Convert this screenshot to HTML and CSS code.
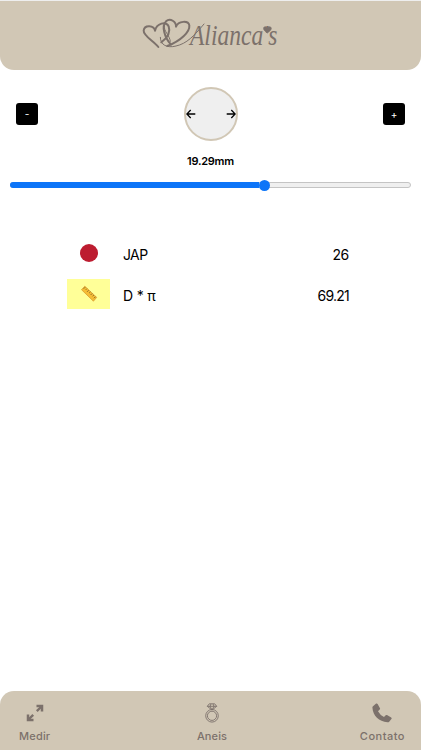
FILE: index.html
```html
<!DOCTYPE html>
<html lang="pt">
<head>
<meta charset="utf-8">
<meta name="viewport" content="width=device-width">
<title>Alianca's</title>
<link rel="stylesheet" href="styles.css">
</head>
<body>
<header class="header">
  <svg class="logo" viewBox="0 0 480 150">
    <g fill="none" stroke="#7c716b" stroke-linecap="round" stroke-linejoin="round">
      <path stroke-width="6" d="M85 111C70 92 40 78 41 62C43 43 72 45 75 62C80 40 108 32 116 49C122 65 112 83 94 97"/>
      <path stroke-width="6" d="M123 104C103 82 94 48 108 34C121 22 139 36 138 50C145 32 175 31 178 46C180 65 154 91 112 108"/>
      <path stroke-width="3" d="M91 82C91 105 111 115 138 108C170 101 192 78 222 42"/>
      <path stroke-width="3" d="M103 47C100 64 119 75 121 94"/>
    </g>
    <text class="brand" x="180" y="106" textLength="262" lengthAdjust="spacingAndGlyphs">Alianca's</text>
    <path fill="#7c716b" d="M412 69C405 63 399 59 401 53C403 48 410 50 412 55C415 49 423 49 424 55C424 61 417 65 412 69Z" stroke="#7c716b" stroke-width="2"/>
  </svg>
</header>
<main class="main">
  <section class="measure">
    <button class="step">-</button>
    <div class="ring">
      <svg viewBox="0 0 10 10"><path d="M9.3 5H.8M4.7 1 .8 5l3.9 4"/></svg>
      <svg viewBox="0 0 10 10"><path d="M.7 5h8.5M5.3 1l3.9 4-3.9 4"/></svg>
    </div>
    <button class="step">+</button>
  </section>
  <div class="size">19.29mm</div>
  <div class="slider"><div class="fill"></div><div class="thumb"></div></div>
  <section class="results">
    <div class="row">
      <div class="flag"><span class="sun"></span></div>
      <span class="name">JAP</span><span class="value jap">26</span>
    </div>
    <div class="row">
      <div class="flag yellow">
        <svg class="ruler" viewBox="0 0 18 18">
          <path fill="#f6bd35" stroke="#d4972c" stroke-width=".7" d="M1.5 4.7 4.8 1.2 16.7 12.4 13.4 16.2Z"/>
          <path stroke="#705628" stroke-width=".8" d="m5.2 2.2-1.5 1.5m3.2 0L5.8 4.8m2.8.5L7.1 6.8m3.3.1L9.2 8m2.9.5-1.5 1.5m3.2.1-1.2 1.2m2.9.4L14 13.2"/>
        </svg>
      </div>
      <span class="name pi">D * π</span><span class="value">69.21</span>
    </div>
  </section>
</main>
<nav class="nav">
  <a class="item">
    <svg viewBox="0 0 20 20"><g fill="none" stroke="#7c716b" stroke-width="2.4"><path d="M11.8 8.2 16.5 3.5M8.2 11.8l-4.7 4.7"/><path stroke-width="2.5" d="M11.5 3H17v5.5M3 11.5V17h5.5"/></g></svg>
    <span class="medir">Medir</span>
  </a>
  <a class="item">
    <svg viewBox="0 0 20 20"><g fill="none" stroke="#7c716b" stroke-width=".9"><circle cx="10" cy="12.8" r="6.3"/><circle cx="10" cy="12.8" r="4.6"/><path d="M7.3.8h5.4l2 2.5L10 7 5.3 3.3ZM5.3 3.3h9.4M8 3.3l2 3.6 2-3.6M8 3.3 9 1m3 2.3L11 1"/></g></svg>
    <span class="aneis">Aneis</span>
  </a>
  <a class="item">
    <svg viewBox="0 0 20 20"><path fill="#7c716b" d="M1 3.2 4.1.6Q5 .1 5.6 1L8 5.3Q8.3 6 7.7 6.6L6 8.2Q8 12 12 14L13.7 12.3Q14.3 11.8 15 12.1L19.2 14.4Q20 15 19.6 15.7L17.2 18.8Q16.6 19.4 15.5 19.3C7 18.8.9 13 .4 4.6Q.4 3.7 1 3.2Z"/></svg>
    <span class="contato">Contato</span>
  </a>
</nav>
</body>
</html>
```
FILE: styles.css
```css
* { box-sizing: border-box; }
body {
  margin: 0;
  height: 750px;
  display: flex;
  flex-direction: column;
  overflow: hidden;
  background: #fff;
  color: #000;
  font-family: Inter, "Open Sans", sans-serif;
}
.header {
  width: 421px;
  height: 69.5px;
  border-top: 1px solid #eee;
  border-radius: 0 0 14px 14px;
  background: #d1c7b5;
  padding: 9px 0 0 130px;
}
.logo { display: block; width: 160px; height: 50px; overflow: visible; }
.brand { font: italic 90px "Liberation Serif", serif; fill: #7c716b; }
.main { flex: 1; }
.measure {
  display: flex;
  align-items: center;
  justify-content: space-between;
  width: 421px;
  height: 54px;
  margin-top: 17px;
  padding: 0 16px;
}
.step {
  width: 22px;
  height: 22px;
  padding: 0;
  border: 0;
  border-radius: 3px;
  background: #000;
  color: #fff;
  font: 10px Inter, sans-serif;
}
.ring {
  display: flex;
  align-items: center;
  justify-content: space-between;
  width: 54px;
  height: 54px;
  border: 2px solid #d1c7b5;
  border-radius: 50%;
  background: #efefef;
}
.ring svg { width: 10px; height: 10px; fill: none; stroke: #000; stroke-width: 1.3; }
.size {
  width: 421px;
  margin-top: 12.5px;
  height: 16px;
  line-height: 16px;
  text-align: center;
  font-size: 11px;
  font-weight: 600;
  letter-spacing: -.25px;
}
.slider {
  display: flex;
  align-items: center;
  width: 401px;
  height: 6px;
  margin: 13px 0 0 10px;
  border: 1px solid #c4c4c4;
  border-radius: 3px;
  background: #efefef;
}
.fill { width: 249px; height: 6px; margin-left: -1px; border-radius: 3px 0 0 3px; background: #0d75f8; flex: none; }
.thumb { width: 11px; height: 11px; border-radius: 50%; background: #0d75f8; flex: none; }
.results { width: 282px; margin: 50px 0 0 67px; }
.row { display: flex; align-items: center; height: 30px; margin-bottom: 11px; }
.flag { display: flex; align-items: center; justify-content: center; width: 43px; height: 30px; margin-right: 13px; }
.yellow { background: #ffff98; }
.sun { width: 18px; height: 18px; border-radius: 50%; background: #bd1c30; margin-bottom: 1px; }
.ruler { width: 18px; height: 18px; }
.name, .value { font-size: 14px; line-height: 20px; padding-top: 4px; }
.name { letter-spacing: -.6px; }
.pi { letter-spacing: -.2px; }
.value { margin-left: auto; letter-spacing: -.75px; }
.jap { letter-spacing: -.3px; }
.nav {
  display: grid;
  grid-template-columns: 1fr auto 1fr;
  width: 421px;
  height: 59px;
  padding: 12px 16px 0 19px;
  border-radius: 14px 14px 0 0;
  background: #d1c7b5;
  color: #7c716b;
}
.item { display: flex; flex-direction: column; align-items: center; font-size: 11px; font-weight: 500; line-height: 16px; }
.item:first-child { justify-self: start; }
.item:last-child { justify-self: end; }
.item svg { width: 20px; height: 20px; margin-bottom: 5px; }
.medir { letter-spacing: .2px; }
.aneis { letter-spacing: .1px; }
.contato { letter-spacing: .5px; }
```
